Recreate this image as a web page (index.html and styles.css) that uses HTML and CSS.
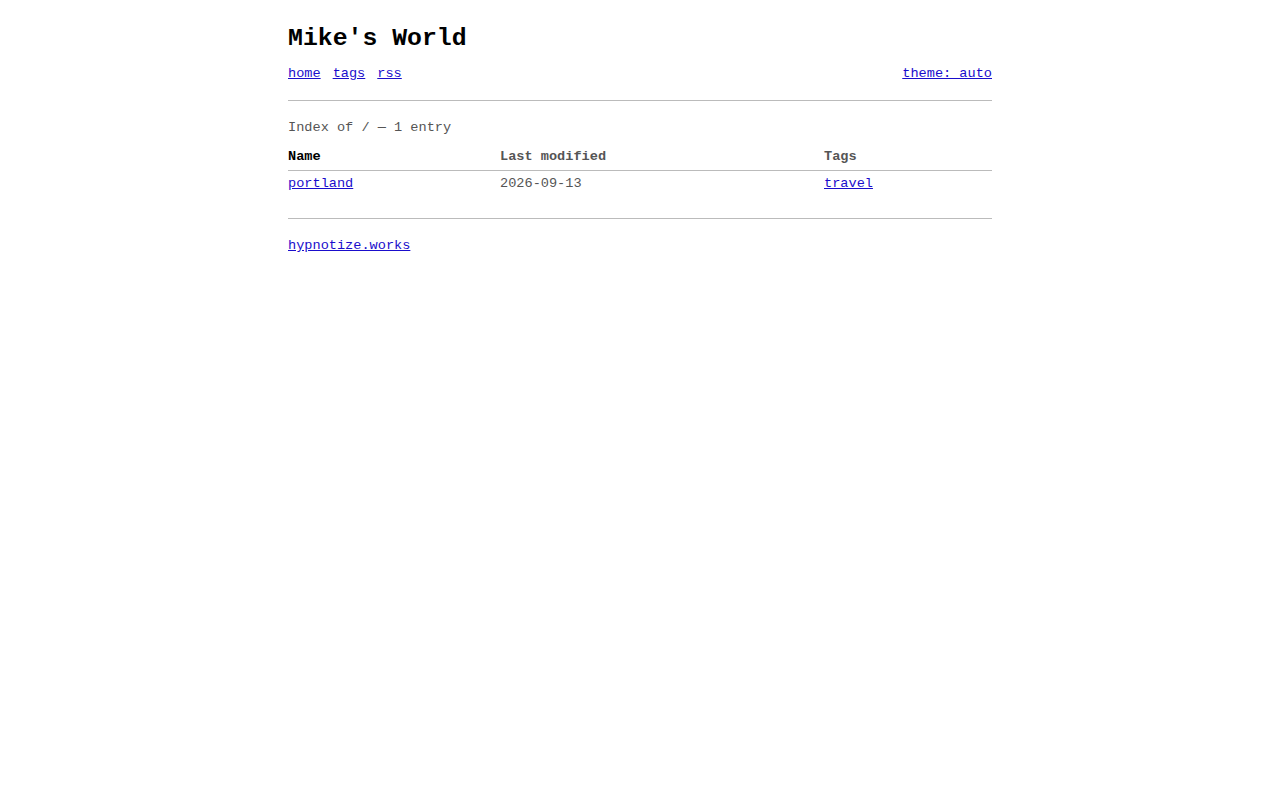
FILE: index.html
```html
<!DOCTYPE html>
<html>
<head>
<meta charset="utf-8">
<title>Mike's World</title>
<link rel="stylesheet" href="styles.css">
</head>
<body>
<div class="page">
  <header class="site-header">
    <h1 class="site-title">Mike's World</h1>
    <nav class="nav">
      <div class="nav-left">
        <a href="#">home</a>
        <a href="#">tags</a>
        <a href="#">rss</a>
      </div>
      <a href="#" class="theme">theme: auto</a>
    </nav>
  </header>
  <hr class="rule">
  <main>
    <p class="summary">Index of / — 1 entry</p>
    <table class="listing">
      <thead>
        <tr>
          <th class="col-name">Name</th>
          <th class="col-date">Last modified</th>
          <th class="col-tags">Tags</th>
        </tr>
      </thead>
      <tbody>
        <tr>
          <td><a href="#">portland</a></td>
          <td class="date">2026-09-13</td>
          <td><a href="#">travel</a></td>
        </tr>
      </tbody>
    </table>
  </main>
  <hr class="rule footer-rule">
  <footer class="footer">
    <a href="#">hypnotize.works</a>
  </footer>
</div>
</body>
</html>
```
FILE: styles.css
```css
html, body {
  margin: 0;
  padding: 0;
  background: #fff;
}
body {
  font-family: "Liberation Mono", "Courier New", monospace;
  font-size: 13.6px;
  color: #000;
}
a {
  color: #1a0dcc;
}
.page {
  width: 704px;
  margin: 0 auto;
  padding-top: 21px;
}
.site-title {
  font-size: 24.8px;
  font-weight: bold;
  margin: 0;
  line-height: 34px;
}
.nav {
  display: flex;
  justify-content: space-between;
  margin-top: 11px;
  line-height: 16px;
}
.nav-left {
  display: flex;
  gap: 12px;
}
.rule {
  border: 0;
  border-top: 1px solid #bbb;
  margin: 18px 0 0;
  height: 0;
}
.summary {
  margin: 19px 0 0;
  color: #555;
  line-height: 16px;
}
.listing {
  width: 704px;
  border-collapse: collapse;
  margin-top: 13px;
}
.listing th {
  text-align: left;
  font-weight: bold;
  color: #555;
  padding: 0 0 5px;
  border-bottom: 1px solid #bbb;
  line-height: 16px;
}
.listing th.col-name {
  color: #000;
  width: 212px;
}
.listing th.col-date {
  width: 324px;
}
.listing td {
  padding: 5px 0 0;
  line-height: 16px;
}
.listing td.date {
  color: #555;
}
.footer-rule {
  margin-top: 26px;
}
.footer {
  margin-top: 19px;
  line-height: 16px;
}
```
